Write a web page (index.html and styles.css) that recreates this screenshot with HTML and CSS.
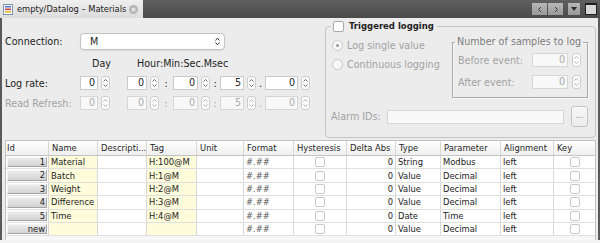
FILE: index.html
```html
<!DOCTYPE html>
<html lang="en">
<head>
    <meta charset="UTF-8">
    <title>empty/Datalog – Materials</title>
    <link rel="stylesheet" href="styles.css">
</head>
<body>

    <svg class="defs" width="0" height="0">
        <symbol id="spin" viewBox="0 0 9 14">
            <rect x="0.5" y="0.5" width="8" height="13" rx="2.5" fill="#fbfbfb" stroke="#cdcdcd"/>
            <path d="M2.5 5.5 4.5 3.5 6.5 5.5M2.5 8.5 4.5 10.5 6.5 8.5" fill="none" stroke="currentColor"/>
        </symbol>
    </svg>

    <!-- Barre d'onglets -->
    <div class="tabbar">
        <div class="tab">
            <svg class="tab-icon" width="10" height="11" viewBox="0 0 10 11">
                <rect x="0.5" y="0.5" width="9" height="10" fill="#fff" stroke="#8290ad"/>
                <rect x="2" y="2" width="6" height="1.5" fill="#3f6fd4"/>
                <rect x="2" y="4.5" width="6" height="1.5" fill="#d64040"/>
                <rect x="2" y="7" width="6" height="1.5" fill="#e6b622"/>
            </svg>
            <span class="tab-title">empty/Datalog – Materials</span>
            <svg class="tab-close" width="9" height="9" viewBox="0 0 9 9">
                <circle cx="4.5" cy="4.5" r="4.5" fill="#b5b5b5"/>
                <path d="M2.8 2.8 6.2 6.2M6.2 2.8 2.8 6.2" stroke="#f4f4f4" stroke-width="1.2"/>
            </svg>
        </div>
        <div class="tab-tools">
            <span class="tool"><svg width="6" height="7"><path d="M4 1 1.5 3.5 4 6" fill="none" stroke="#3a3a3a"/></svg></span>
            <span class="tool"><svg width="6" height="7"><path d="M2 1 4.5 3.5 2 6" fill="none" stroke="#3a3a3a"/></svg></span>
            <span class="tool tool-menu"><svg width="6" height="4"><path d="M0 0H6L3 4Z" fill="#2a2a2a"/></svg></span>
            <span class="tool tool-max"></span>
        </div>
    </div>

    <div class="editor">
        <div class="top">

            <!-- Connexion et cadence -->
            <div class="settings">
                <div class="row conn-row">
                    <span class="lbl">Connection:</span>
                    <div class="combo">
                        <span>M</span>
                        <svg width="5" height="9" viewBox="0 0 5 9"><path d="M0.5 3.5 2.5 1.2 4.5 3.5M0.5 5.5 2.5 7.8 4.5 5.5" fill="none" stroke="#333"/></svg>
                    </div>
                </div>
                <div class="row head-row">
                    <span class="h-day">Day</span>
                    <span class="h-time">Hour:Min:Sec.Msec</span>
                </div>
                <div class="row time-row">
                    <span class="lbl">Log rate:</span>
                    <span class="spin"><span class="field w-day">0</span><svg class="arrows"><use href="#spin"/></svg></span>
                    <span class="sep s-day"></span>
                    <span class="spin"><span class="field w-hour">0</span><svg class="arrows"><use href="#spin"/></svg></span>
                    <span class="sep s-hour">:</span>
                    <span class="spin"><span class="field w-min">0</span><svg class="arrows"><use href="#spin"/></svg></span>
                    <span class="sep s-min">:</span>
                    <span class="spin"><span class="field w-sec">5</span><svg class="arrows"><use href="#spin"/></svg></span>
                    <span class="sep s-sec">.</span>
                    <span class="spin"><span class="field w-msec">0</span><svg class="arrows"><use href="#spin"/></svg></span>
                </div>
                <div class="row time-row disabled">
                    <span class="lbl">Read Refresh:</span>
                    <span class="spin"><span class="field w-day">0</span><svg class="arrows"><use href="#spin"/></svg></span>
                    <span class="sep s-day"></span>
                    <span class="spin"><span class="field w-hour">0</span><svg class="arrows"><use href="#spin"/></svg></span>
                    <span class="sep s-hour">:</span>
                    <span class="spin"><span class="field w-min">0</span><svg class="arrows"><use href="#spin"/></svg></span>
                    <span class="sep s-min">:</span>
                    <span class="spin"><span class="field w-sec">5</span><svg class="arrows"><use href="#spin"/></svg></span>
                    <span class="sep s-sec">.</span>
                    <span class="spin"><span class="field w-msec">0</span><svg class="arrows"><use href="#spin"/></svg></span>
                </div>
            </div>

            <!-- Enregistrement déclenché -->
            <fieldset class="trigger">
                <legend class="trigger-title"><span class="check"></span>Triggered logging</legend>
                <div class="trigger-body">
                    <div class="modes">
                        <div class="mode"><span class="radio on"></span>Log single value</div>
                        <div class="mode"><span class="radio"></span>Continuous logging</div>
                    </div>
                    <fieldset class="samples">
                        <legend>Number of samples to log</legend>
                        <div class="sample-row sample-first">
                            <span class="sample-lbl">Before event:</span>
                            <span class="field w-sample">0</span>
                            <svg class="arrows"><use href="#spin"/></svg>
                        </div>
                        <div class="sample-row">
                            <span class="sample-lbl">After event:</span>
                            <span class="field w-sample">0</span>
                            <svg class="arrows"><use href="#spin"/></svg>
                        </div>
                    </fieldset>
                    <div class="alarm-row">
                        <span class="alarm-lbl">Alarm IDs:</span>
                        <span class="field w-alarm"></span>
                        <span class="dots">...</span>
                    </div>
                </div>
            </fieldset>
        </div>

        <!-- Tableau des variables -->
        <div class="grid">
            <div class="g-row g-head">
                <span>Id</span><span>Name</span><span>Descripti...</span><span>Tag</span><span>Unit</span><span>Format</span>
                <span>Hysteresis</span><span>Delta Abs</span><span>Type</span><span>Parameter</span><span>Alignment</span><span>Key</span>
            </div>
            <div class="g-row">
                <span class="rh"><span class="rh-btn">1</span></span><span class="y">Material</span><span></span><span class="y">H:100@M</span><span></span><span class="fmt">#.##</span>
                <span class="chk"><i class="box"></i></span><span class="num">0</span><span>String</span><span>Modbus</span><span>left</span><span class="chk"><i class="box"></i></span>
            </div>
            <div class="g-row">
                <span class="rh"><span class="rh-btn">2</span></span><span class="y">Batch</span><span></span><span class="y">H:1@M</span><span></span><span class="fmt">#.##</span>
                <span class="chk"><i class="box"></i></span><span class="num">0</span><span>Value</span><span>Decimal</span><span>left</span><span class="chk"><i class="box"></i></span>
            </div>
            <div class="g-row">
                <span class="rh"><span class="rh-btn">3</span></span><span class="y">Weight</span><span></span><span class="y">H:2@M</span><span></span><span class="fmt">#.##</span>
                <span class="chk"><i class="box"></i></span><span class="num">0</span><span>Value</span><span>Decimal</span><span>left</span><span class="chk"><i class="box"></i></span>
            </div>
            <div class="g-row">
                <span class="rh"><span class="rh-btn">4</span></span><span class="y">Difference</span><span></span><span class="y">H:3@M</span><span></span><span class="fmt">#.##</span>
                <span class="chk"><i class="box"></i></span><span class="num">0</span><span>Value</span><span>Decimal</span><span>left</span><span class="chk"><i class="box"></i></span>
            </div>
            <div class="g-row">
                <span class="rh"><span class="rh-btn">5</span></span><span class="y">Time</span><span></span><span class="y">H:4@M</span><span></span><span class="fmt">#.##</span>
                <span class="chk"><i class="box"></i></span><span class="num">0</span><span>Date</span><span>Time</span><span>left</span><span class="chk"><i class="box"></i></span>
            </div>
            <div class="g-row">
                <span class="rh"><span class="rh-btn">new</span></span><span class="y"></span><span></span><span class="y"></span><span></span><span class="fmt">#.##</span>
                <span class="chk"><i class="box"></i></span><span class="num">0</span><span>Value</span><span>Decimal</span><span>left</span><span class="chk"><i class="box"></i></span>
            </div>
        </div>
    </div>

</body>
</html>
```

FILE: styles.css
```css
/* Style général */
* {
    box-sizing: border-box;
}

body {
    margin: 0;
    width: 600px;
    height: 243px;
    overflow: hidden;
    background: #f3f3f3;
    font-family: "DejaVu Sans", sans-serif;
    font-size: 9.6px;
    color: #1e1e1e;
}

.defs {
    position: absolute;
    width: 0;
    height: 0;
    overflow: hidden;
}

/* Barre d'onglets */
.tabbar {
    display: flex;
    justify-content: space-between;
    height: 18px;
    background: linear-gradient(#606060, #4a4a4a);
}

.tab {
    display: flex;
    align-items: center;
    width: 143px;
    height: 18px;
    padding-left: 3px;
    background: linear-gradient(#efefef, #dcdcdc);
    font-size: 8.3px;
    color: #222;
}

.tab-icon {
    margin-right: 4px;
}

.tab-title {
    flex: 1;
}

.tab-close {
    margin-right: 5px;
}

.tab-tools {
    display: flex;
    align-items: center;
    padding-right: 3px;
}

.tool {
    display: flex;
    align-items: center;
    justify-content: center;
    width: 15px;
    height: 12px;
    background: linear-gradient(#b8b8b8, #999);
}

.tool + .tool {
    margin-left: 1px;
}

.tool-menu {
    width: 12px;
    margin-left: 5px !important;
}

.tool-max {
    width: 12px;
    margin-left: 5px !important;
    background: #d8d8d8;
    border: 1px solid #1e1e1e;
    border-top-width: 2px;
}

/* Zone d'édition */
.editor {
    height: 222px;
    background: #ececec;
    border-left: 2px solid #5a5a5a;
    border-right: 2px solid #5a5a5a;
}

.top {
    display: flex;
    align-items: flex-start;
}

.settings {
    width: 323px;
    padding: 15px 0 0 3px;
}

.row {
    display: flex;
    align-items: center;
}

.lbl {
    width: 75px;
    flex: none;
}

.conn-row {
    height: 17px;
}

.combo {
    display: flex;
    align-items: center;
    justify-content: space-between;
    width: 145px;
    height: 17px;
    padding: 0 4px 0 9px;
    background: #fff;
    border: 1px solid #c2c2c2;
    border-radius: 4px;
    box-shadow: 0 1px 1px rgba(0, 0, 0, 0.08);
}

.head-row {
    height: 12px;
    margin-top: 7px;
}

.h-day {
    width: 45px;
    margin-left: 87px;
}

.time-row {
    height: 14px;
    margin-top: 7px;
}

.time-row + .time-row {
    margin-top: 6px;
}

.spin {
    display: flex;
    gap: 3px;
}

.field {
    display: block;
    height: 14px;
    padding-right: 2px;
    background: #fff;
    border: 1px solid #cacaca;
    text-align: right;
    line-height: 12px;
}

.arrows {
    width: 9px;
    height: 14px;
    color: #6e6e6e;
}

.w-day { width: 18px; }
.w-hour { width: 20px; }
.w-min { width: 25px; }
.w-sec { width: 24px; }
.w-msec { width: 33px; }
.w-sample { width: 36px; }
.w-alarm { width: 179px; }

.sep {
    text-align: center;
}

.s-day { width: 17px; }
.s-hour { width: 14px; }
.s-min { width: 10px; }
.s-sec { width: 9px; }

/* Champs désactivés */
.disabled,
.trigger-body {
    color: #a2a2a2;
}

.disabled .field,
.trigger-body .field {
    background: #f8f8f8;
    border-color: #d6d6d6;
    color: #a8a8a8;
}

.disabled .arrows,
.trigger-body .arrows {
    color: #b4b4b4;
}

/* Cadre "Triggered logging" */
.trigger {
    width: 271px;
    margin: 2px 0 0;
    padding: 0 0 10px;
    border: 1px solid #c6c6c6;
    border-radius: 4px;
    min-width: 0;
}

.trigger-title {
    display: flex;
    align-items: center;
    height: 12px;
    margin-left: 5px;
    padding: 0 3px 0 2px;
    font-weight: bold;
    font-size: 8.5px;
}

.check {
    width: 11px;
    height: 11px;
    margin-right: 5px;
    background: #fff;
    border: 1px solid #a9a9a9;
    border-radius: 2px;
}

.trigger-body {
    display: grid;
    grid-template-columns: 126px 136px;
}

.modes {
    padding: 8px 0 0 6px;
}

.mode {
    display: flex;
    align-items: center;
    height: 11px;
    white-space: nowrap;
}

.mode + .mode {
    margin-top: 8px;
}

.radio {
    position: relative;
    width: 11px;
    height: 11px;
    margin-right: 4px;
    background: #f7f7f7;
    border: 1px solid #c8c8c8;
    border-radius: 50%;
}

/* point du bouton radio sélectionné */
.radio.on::after {
    content: "";
    position: absolute;
    left: 3px;
    top: 3px;
    width: 3px;
    height: 3px;
    border-radius: 50%;
    background: #9a9a9a;
}

.samples {
    width: 136px;
    margin: 4px 0 0;
    padding: 0 6px 8px 5px;
    border: 1px solid #a8a8a8;
    box-shadow: inset 1px 1px 0 #fafafa, 1px 1px 0 #fafafa;
    min-width: 0;
}

.samples legend {
    height: 12px;
    margin-left: -3px;
    padding: 0 2px;
    line-height: 12px;
    white-space: nowrap;
    color: #7a7a7a;
}

.sample-row {
    display: flex;
    align-items: center;
    height: 14px;
    margin-top: 8px;
}

.sample-first {
    margin-top: 5px;
}

.sample-lbl {
    width: 74px;
    white-space: nowrap;
}

.sample-row .arrows {
    margin-left: 4px;
}

.alarm-row {
    grid-column: 1 / 3;
    display: flex;
    align-items: center;
    height: 21px;
    margin-top: 8px;
    padding-left: 5px;
}

.alarm-lbl {
    width: 57px;
}

.dots {
    width: 17px;
    height: 21px;
    margin-left: 7px;
    background: linear-gradient(#f8f8f8, #ececec);
    border: 1px solid #c4c4c4;
    border-radius: 3px;
    text-align: center;
    line-height: 18px;
    font-size: 8px;
    color: #8a8a8a;
}

/* Tableau */
.grid {
    width: 591px;
    height: 100px;
    margin: 2px 0 0 3px;
    background: #f7f7f7;
    border: 1px solid #c2c2c2;
    border-bottom: 0;
    font-size: 8.4px;
    color: #1a1a1a;
}

.g-row {
    display: grid;
    grid-template-columns: 43px 49px 49px 50px 47px 50px 53px 49px 45px 60px 53px 41px;
    height: 13.4px;
    background: #fff;
    border-bottom: 1px solid #dfdfdf;
}

.g-row > span {
    display: flex;
    align-items: center;
    overflow: hidden;
    white-space: nowrap;
    padding: 0 2px;
    border-right: 1px solid #d8d8d8;
}

.g-row > span:last-child {
    border-right: 0;
}

.g-head {
    height: 15px;
    background: linear-gradient(#fff, #efefef);
    border-bottom-color: #c4c4c4;
    color: #262626;
}

.g-head > span {
    padding-left: 3px;
}

.g-head > span:first-child {
    padding-left: 1px;
}

.y {
    background: #fffcdc;
}

.fmt {
    color: #5a5a5a;
}

.num {
    justify-content: flex-end;
}

.chk {
    justify-content: center;
}

.box {
    width: 10px;
    height: 10px;
    background: #fff;
    border: 1px solid #c9c9c9;
    border-radius: 2px;
}

.g-row > .rh {
    padding: 1px;
}

.rh-btn {
    flex: 1;
    height: 100%;
    padding-right: 1px;
    background: linear-gradient(#ebebeb, #d3d3d3);
    border: 1px solid;
    border-color: #f4f4f4 #a4a4a4 #a4a4a4 #f4f4f4;
    text-align: right;
    line-height: 9px;
}
```
